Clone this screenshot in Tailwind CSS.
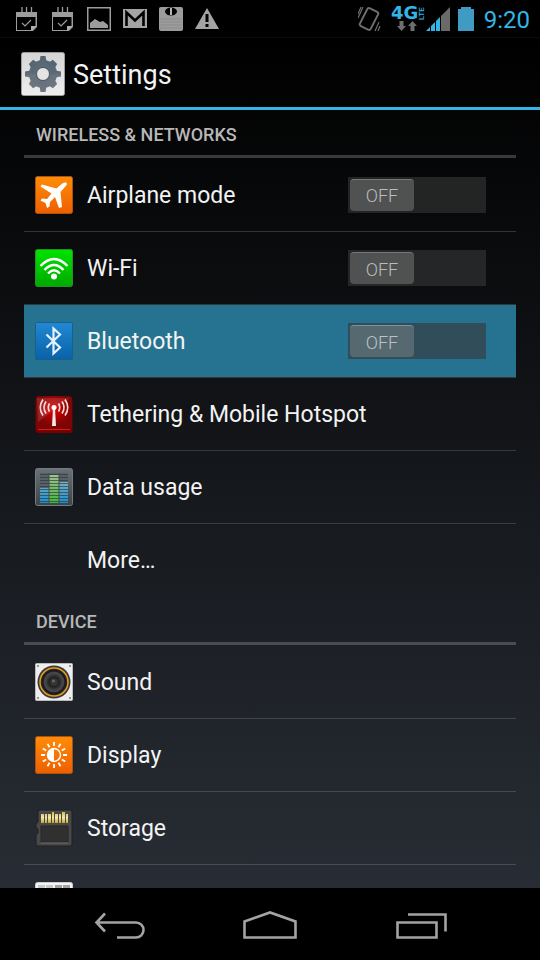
<!DOCTYPE html>
<html lang="en">

<head>
    <meta charset="UTF-8">
    <meta name="viewport" content="width=device-width, initial-scale=1.0">
    <title>Settings</title>

    <script src="https://cdn.jsdelivr.net/npm/@tailwindcss/browser@4"></script>
</head>

<body class="flex h-screen flex-col overflow-hidden bg-black font-['Roboto',sans-serif] text-[#f3f3f3]">
    <!-- status bar -->
    <div class="flex h-[38px] shrink-0 items-center justify-between border-b border-[#0c0a0a] bg-black pr-2.5 pl-[15px]">
        <div class="flex gap-3">
            <svg class="size-6" viewBox="0 0 24 24" fill="none">
                <path d="M1 5h21v15l-5 5H1z" fill="#9c9c9c" />
                <path d="M2 10h18.500v9H16v4H2z" fill="#000" />
                <path d="M7 0v5M11.500 0v5M16.500 0v5" stroke="#9c9c9c" stroke-width="1.300" />
                <path d="M16 24v-5h5.500z" fill="#b0b0b0" />
                <path d="M7 16l3 3 6-6" stroke="#9c9c9c" stroke-width="1.200" />
            </svg>
            <svg class="size-6" viewBox="0 0 24 24" fill="none">
                <path d="M1 5h21v15l-5 5H1z" fill="#9c9c9c" />
                <path d="M2 10h18.500v9H16v4H2z" fill="#000" />
                <path d="M7 0v5M11.500 0v5M16.500 0v5" stroke="#9c9c9c" stroke-width="1.300" />
                <path d="M16 24v-5h5.500z" fill="#b0b0b0" />
                <path d="M7 16l3 3 6-6" stroke="#9c9c9c" stroke-width="1.200" />
            </svg>
            <svg class="size-6" viewBox="0 0 24 24">
                <rect x=".75" y=".75" width="22.5" height="22.5" fill="none" stroke="#9c9c9c" stroke-width="1.500" />
                <path d="M3 21v-5l5-4 5 3 3-1 5 4v3z" fill="#9c9c9c" />
            </svg>
            <svg class="size-6" viewBox="0 0 24 24">
                <path d="M0 2h24v19H0z" fill="#a4a4a4" />
                <path d="M3.500 19V5.500l8.500 8 8.500-8V19" fill="none" stroke="#000" stroke-width="2.600" />
                <path d="M5 2h14l-7 6z" fill="#a4a4a4" />
            </svg>
            <svg class="size-6" viewBox="0 0 24 24">
                <rect width="24" height="24" rx="2" fill="#9c9c9c" />
                <path d="M1 12h22M1 15h22M1 18h22M1 21h22" stroke="#8b8b8b" />
                <ellipse cx="12" cy="4.500" rx="6" ry="4" fill="#000" />
                <path d="M12 1v7" stroke="#b5b5b5" stroke-width="2" />
            </svg>
            <svg class="size-6" viewBox="0 0 24 24">
                <path d="M12 1l12 21H0z" fill="#a4a4a4" />
                <path d="M12 7v8M12 17v3" stroke="#000" stroke-width="3" />
            </svg>
        </div>
        <div class="flex items-center">
            <svg class="mr-2.5 h-[26px] w-6" viewBox="0 0 24 26" fill="none" stroke="#6e6e6e">
                <rect x="5" y="3" width="12" height="20" rx="2" stroke-width="2" transform="rotate(27 11 13)" />
                <path d="M0 12l5-11M0 8l3-7M17 25l4-9M20 25l2-5" stroke-width="1.200" />
            </svg>
            <svg class="h-[26px] w-[34px] overflow-visible" viewBox="0 0 34 26">
                <text x="-1" y="13" font-family="DejaVu Sans" font-weight="700" font-size="18" fill="#33b5e5">4G</text>
                <text x="-14" y="32" font-family="Roboto" font-weight="500" font-size="8" fill="#33b5e5" transform="rotate(-90)">LTE</text>
                <path d="M5 20h2.500v-5h4v5H14l-4.500 5zM16 20l4.500-5 4.500 5h-2.500v5h-4v-5z" fill="#6e6e6e" />
            </svg>
            <svg class="mr-2 size-6" viewBox="0 0 24 24">
                <path d="M15 9l9-9v24h-9z" fill="#6a6a6a" />
                <path d="M0 24l4-4v4zM5 19l4-4v9H5zM10 14l4-4v14h-4z" fill="#33b5e5" />
            </svg>
            <svg class="mr-2.5 h-6 w-4" viewBox="0 0 16 24">
                <path d="M3 0h10v2h3v22H0V2h3z" fill="#3f9bc2" />
            </svg>
            <span class="pt-0.5 text-2xl leading-8 text-[#33b5e5]">9:20</span>
        </div>
    </div>

    <div class="flex min-h-0 flex-1 flex-col bg-linear-to-b/srgb from-black to-[#282d35]">
        <header class="flex h-[72px] shrink-0 items-center gap-2 border-b-3 border-[#33b5e5] pt-0.5 pl-[21px]">
            <svg class="size-11" viewBox="0 0 44 44">
                <defs>
                    <linearGradient id="plate" x2="0" y2="1">
                        <stop stop-color="#d4d4d4" />
                        <stop offset="1" stop-color="#eeeeee" />
                    </linearGradient>
                    <linearGradient id="gear" x2="0" y2="1">
                        <stop stop-color="#566472" />
                        <stop offset="1" stop-color="#6d7782" />
                    </linearGradient>
                </defs>
                <rect x=".5" y=".5" width="43" height="43" rx="2" fill="url(#plate)" stroke="#9a9a9a" />
                <g fill="url(#gear)">
                    <circle cx="22" cy="22" r="14" />
                    <path d="M18.500 10l1-6h5l1 6v24l-1 6h-5l-1-6z" />
                    <path d="M10 18.500l-6 1v5l6 1h24l6-1v-5l-6-1z" />
                    <path d="M18 9l1-4h6l1 4v26l-1 4h-6l-1-4z" transform="rotate(45 22 22)" />
                    <path d="M18 9l1-4h6l1 4v26l-1 4h-6l-1-4z" transform="rotate(-45 22 22)" />
                </g>
                <circle cx="22" cy="22" r="6.500" fill="#e4e4e4" stroke="#4a535d" />
            </svg>
            <h1 class="pt-0.5 text-[27px] leading-9">Settings</h1>
        </header>

        <main class="min-h-0 flex-1 overflow-hidden px-6">
            <section>
                <h2 class="h-12 border-b-3 border-[#38393a] px-3 pt-[13px] text-lg leading-6 font-medium text-[#b8b8b8]">WIRELESS &amp; NETWORKS</h2>

                <div class="flex h-[73px] items-center gap-3.5 pr-[30px] pl-[11px]">
                    <svg class="size-[38px]" viewBox="0 0 38 38">
                        <defs>
                            <linearGradient id="orange" x2="0" y2="1">
                                <stop stop-color="#ff8c08" />
                                <stop offset="1" stop-color="#ed5f00" />
                            </linearGradient>
                        </defs>
                        <rect x=".5" y=".5" width="37" height="37" rx="2" fill="url(#orange)" stroke="#a85410" />
                        <path d="M31.500 7c-1.500-1-4 0-6 2l-4 3.500L7 8.500 5.500 10.500l11 7-4.500 5.500-5-.5-1.500 2 5 2.500 1.500 5 2.500-1.500.5-4.500 5-5L24 32l3-1-1.500-15 3.500-4c2-2 3.500-4 2.500-5z" fill="#fff" />
                    </svg>
                    <label for="airplane" class="flex-1 pt-0.5 text-[23px] leading-8">Airplane mode</label>
                    <button id="airplane" type="button" role="switch" aria-checked="false" class="h-9 w-[138px] bg-[#232424] p-0.5">
                        <span class="flex h-8 w-16 items-center justify-center rounded-sm border-t border-[#777] bg-[#505151] pt-0.5 text-lg font-light text-[#bcbcbc]">OFF</span>
                    </button>
                </div>

                <div class="flex h-[73px] items-center gap-3.5 border-t border-[#343536] pr-[30px] pl-[11px]">
                    <svg class="size-[38px]" viewBox="0 0 38 38" fill="none">
                        <defs>
                            <linearGradient id="green" x2="0" y2="1">
                                <stop stop-color="#00e400" />
                                <stop offset="1" stop-color="#00a800" />
                            </linearGradient>
                        </defs>
                        <rect x=".5" y=".5" width="37" height="37" rx="2" fill="url(#green)" stroke="#259025" />
                        <path d="M5.500 17q13.500-14 27 0M9.500 21q9.500-10 19 0M13 24.500q6-6.500 12 0" stroke="#fff" stroke-width="2.400" />
                        <circle cx="19" cy="27.500" r="3" fill="#fff" />
                    </svg>
                    <label for="wifi" class="flex-1 pt-0.5 text-[23px] leading-8">Wi-Fi</label>
                    <button id="wifi" type="button" role="switch" aria-checked="false" class="h-9 w-[138px] bg-[#252627] p-0.5">
                        <span class="flex h-8 w-16 items-center justify-center rounded-sm border-t border-[#777] bg-[#505151] pt-0.5 text-lg font-light text-[#bcbcbc]">OFF</span>
                    </button>
                </div>

                <div class="flex h-[73px] items-center gap-3.5 border-t border-[#343536] bg-[#267391] bg-clip-padding pr-[30px] pl-[11px]">
                    <svg class="size-[38px]" viewBox="0 0 38 38" fill="none">
                        <defs>
                            <linearGradient id="blue" x2="0" y2="1">
                                <stop stop-color="#2288d3" />
                                <stop offset="1" stop-color="#0862a8" />
                            </linearGradient>
                        </defs>
                        <rect x=".5" y=".5" width="37" height="37" rx="1" fill="url(#blue)" stroke="#185f8c" />
                        <path d="M11.500 12.500l13.500 13-6.500 6V6.500l6.500 6-13.500 13" stroke="#e8f2fa" stroke-width="2.200" />
                    </svg>
                    <label for="bluetooth" class="flex-1 pt-0.5 text-[23px] leading-8">Bluetooth</label>
                    <button id="bluetooth" type="button" role="switch" aria-checked="false" class="h-9 w-[138px] bg-[#314d59] p-0.5">
                        <span class="flex h-8 w-16 items-center justify-center rounded-sm border-t border-[#80919a] bg-[#566971] pt-0.5 text-lg font-light text-[#bcc2c5]">OFF</span>
                    </button>
                </div>

                <a href="#tethering" class="flex h-[73px] items-center gap-3.5 border-t border-[#38393b] pl-[11px]">
                    <svg class="size-[38px]" viewBox="0 0 38 38" fill="none">
                        <defs>
                            <radialGradient id="red" cy=".4">
                                <stop stop-color="#e00000" />
                                <stop offset="1" stop-color="#7c0505" />
                            </radialGradient>
                        </defs>
                        <rect x=".5" y="2" width="37" height="36" rx="3" fill="#7a0000" />
                        <rect x="1" y="1" width="36" height="33" rx="3" fill="url(#red)" />
                        <path d="M3 34.500h32" stroke="#e01818" />
                        <path d="M2 3h33L3 27z" fill="#fff" fill-opacity=".12" />
                        <path d="M18 13h2l1 18h-4z" fill="#f4e8e8" />
                        <circle cx="19" cy="12.500" r="2.500" fill="#fff" />
                        <path d="M14.500 8.500q-2.500 4 0 8M23.500 8.500q2.500 4 0 8M11 6.500q-4 6 0 12M27 6.500q4 6 0 12M8 4.500q-5.500 8 0 16M30 4.500q5.500 8 0 16" stroke="#f6dada" stroke-width="1.700" />
                    </svg>
                    <span class="pt-0.5 text-[23px] leading-8">Tethering &amp; Mobile Hotspot</span>
                </a>

                <a href="#data" class="flex h-[73px] items-center gap-3.5 border-t border-[#38393b] pl-[11px]">
                    <svg class="size-[38px]" viewBox="0 0 38 38">
                        <defs>
                            <linearGradient id="steel" x2="0" y2="1">
                                <stop stop-color="#697277" />
                                <stop offset="1" stop-color="#3d4448" />
                            </linearGradient>
                            <linearGradient id="bluebar" x2="0" y2="1">
                                <stop stop-color="#78aec2" />
                                <stop offset="1" stop-color="#1c8fd0" />
                            </linearGradient>
                            <linearGradient id="greenbar" x2="0" y2="1">
                                <stop stop-color="#a4bd91" />
                                <stop offset="1" stop-color="#42b83a" />
                            </linearGradient>
                        </defs>
                        <rect x=".5" y=".5" width="37" height="37" rx="2" fill="url(#steel)" stroke="#747c80" />
                        <path d="M5 5h28v30H5z" fill="#596166" />
                        <path d="M5 20h9v15H5zM24 14h9v21h-9z" fill="url(#bluebar)" />
                        <path d="M14 7h10v28H14z" fill="url(#greenbar)" />
                        <path d="M5 6.500h28M5 9.500h28M5 12.500h28M5 15.500h28M5 18.500h28M5 21.500h28M5 24.500h28M5 27.500h28M5 30.500h28M5 33.500h28" stroke="#28383b" stroke-opacity=".65" />
                        <path d="M14 5v30M24 5v30" stroke="#3d4d50" />
                    </svg>
                    <span class="pt-0.5 text-[23px] leading-8">Data usage</span>
                </a>

                <a href="#more" class="flex h-[73px] items-center border-t border-[#3a3c3e] pl-[63px]">
                    <span class="pt-0.5 text-[23px] leading-8">More…</span>
                </a>
            </section>

            <section class="mt-px">
                <h2 class="h-12 border-b-3 border-[#494c50] px-3 pt-[13px] text-lg leading-6 font-medium text-[#b8b8b8]">DEVICE</h2>

                <a href="#sound" class="flex h-[73px] items-center gap-3.5 pl-[11px]">
                    <svg class="size-[38px]" viewBox="0 0 38 38">
                        <defs>
                            <radialGradient id="cone">
                                <stop stop-color="#666" />
                                <stop offset=".3" stop-color="#1c1c1c" />
                                <stop offset=".65" stop-color="#4a4a4a" />
                                <stop offset="1" stop-color="#232323" />
                            </radialGradient>
                        </defs>
                        <rect x=".5" y=".5" width="37" height="37" rx="1" fill="#eeeeee" stroke="#bbb" />
                        <circle cx="19" cy="19" r="16.500" fill="#3a3a3a" />
                        <circle cx="19" cy="19" r="14" fill="url(#cone)" stroke="#e79a21" stroke-width="1.500" />
                        <circle cx="19" cy="19" r="11.500" fill="none" stroke="#1c1c1c" stroke-width="2" />
                        <circle cx="19" cy="19" r="4" fill="#343434" />
                        <circle cx="18.500" cy="18" r="1.500" fill="#666" />
                        <path d="M2 3h2M34 3h2M2 35h2M34 35h2" stroke="#999" stroke-width="2" />
                    </svg>
                    <span class="pt-0.5 text-[23px] leading-8">Sound</span>
                </a>

                <a href="#display" class="flex h-[73px] items-center gap-3.5 border-t border-[#43464a] pl-[11px]">
                    <svg class="size-[38px]" viewBox="0 0 38 38" fill="none">
                        <rect x=".5" y=".5" width="37" height="37" rx="2" fill="url(#orange)" stroke="#a85410" />
                        <circle cx="19" cy="19" r="6.500" stroke="#fff" stroke-width="1.400" />
                        <path d="M19 12.500a6.500 6.500 0 0 0 0 13z" fill="#fff" />
                        <g stroke="#fff" stroke-width="1.800">
                            <path d="M19 6v4M19 28v4M6 19h4M28 19h4" />
                            <path d="M19 6v4M19 28v4M6 19h4M28 19h4" transform="rotate(30 19 19)" />
                            <path d="M19 6v4M19 28v4M6 19h4M28 19h4" transform="rotate(60 19 19)" />
                        </g>
                    </svg>
                    <span class="pt-0.5 text-[23px] leading-8">Display</span>
                </a>

                <a href="#storage" class="flex h-[73px] items-center gap-3.5 border-t border-[#46494e] pl-[11px]">
                    <svg class="size-[38px]" viewBox="0 0 38 38">
                        <defs>
                            <linearGradient id="gold" x2="0" y2="1">
                                <stop stop-color="#cdbb5c" />
                                <stop offset=".5" stop-color="#f2e9a6" />
                                <stop offset="1" stop-color="#c6a62e" />
                            </linearGradient>
                        </defs>
                        <path d="M5 1h30q2 0 2 2v32q0 2-2 2H3q-2 0-2-2v-9l2-2v-4l-2-1v-4l2-2V3q0-2 2-2z" fill="#484848" stroke="#202020" />
                        <path d="M6 17h27v16H6z" fill="#303030" stroke="#272727" />
                        <path d="M6 34h27" stroke="#696969" />
                        <path d="M6 5h3v9H6zM10 5h2v9h-2zM13 5h3v9h-3zM17 3h2v11h-2zM20 5h3v9h-3zM24 5h2v9h-2zM27 3h3v11h-3zM31 5h2v9h-2z" fill="url(#gold)" />
                    </svg>
                    <span class="pt-0.5 text-[23px] leading-8">Storage</span>
                </a>

                <a href="#battery" aria-label="Battery" class="flex h-[73px] items-center gap-3.5 border-t border-[#494d52] pl-[11px]">
                    <svg class="size-[38px]" viewBox="0 0 38 38">
                        <rect x=".5" y=".5" width="37" height="37" rx="2" fill="#f4f4f4" stroke="#ccc" />
                        <path d="M3 3h7v32H3zM11 3h7v32h-7z" fill="#c9c9c9" />
                        <path d="M20 3h7v32h-7zM28 3h7v32h-7z" fill="#a2a2a2" />
                    </svg>
                </a>
            </section>
        </main>
    </div>

    <!-- navigation bar -->
    <nav class="grid h-[72px] shrink-0 grid-cols-3 bg-black px-[45px]">
        <button type="button" aria-label="Back" class="flex items-center justify-center">
            <svg class="h-[30px] w-[54px]" viewBox="0 0 54 30" fill="none" stroke="#a3a3a3" stroke-width="2.600">
                <path d="M3 13.500h40a7.500 7.500 0 0 1 0 15H24M12 4.500l-8.500 9 8.500 9" />
            </svg>
        </button>
        <button type="button" aria-label="Home" class="flex items-center justify-center">
            <svg class="h-[30px] w-[54px]" viewBox="0 0 54 30" fill="none" stroke="#a3a3a3" stroke-width="2.600">
                <path d="M1.500 12.500L27 3.500l25.500 9v16h-51z" />
            </svg>
        </button>
        <button type="button" aria-label="Recent apps" class="flex items-center justify-center">
            <svg class="h-[30px] w-[54px]" viewBox="0 0 54 30" fill="none" stroke="#a3a3a3" stroke-width="2.600">
                <path d="M4.500 13.500h39v15h-39zM15 5.500h37.500v17" />
            </svg>
        </button>
    </nav>
</body>

</html>
